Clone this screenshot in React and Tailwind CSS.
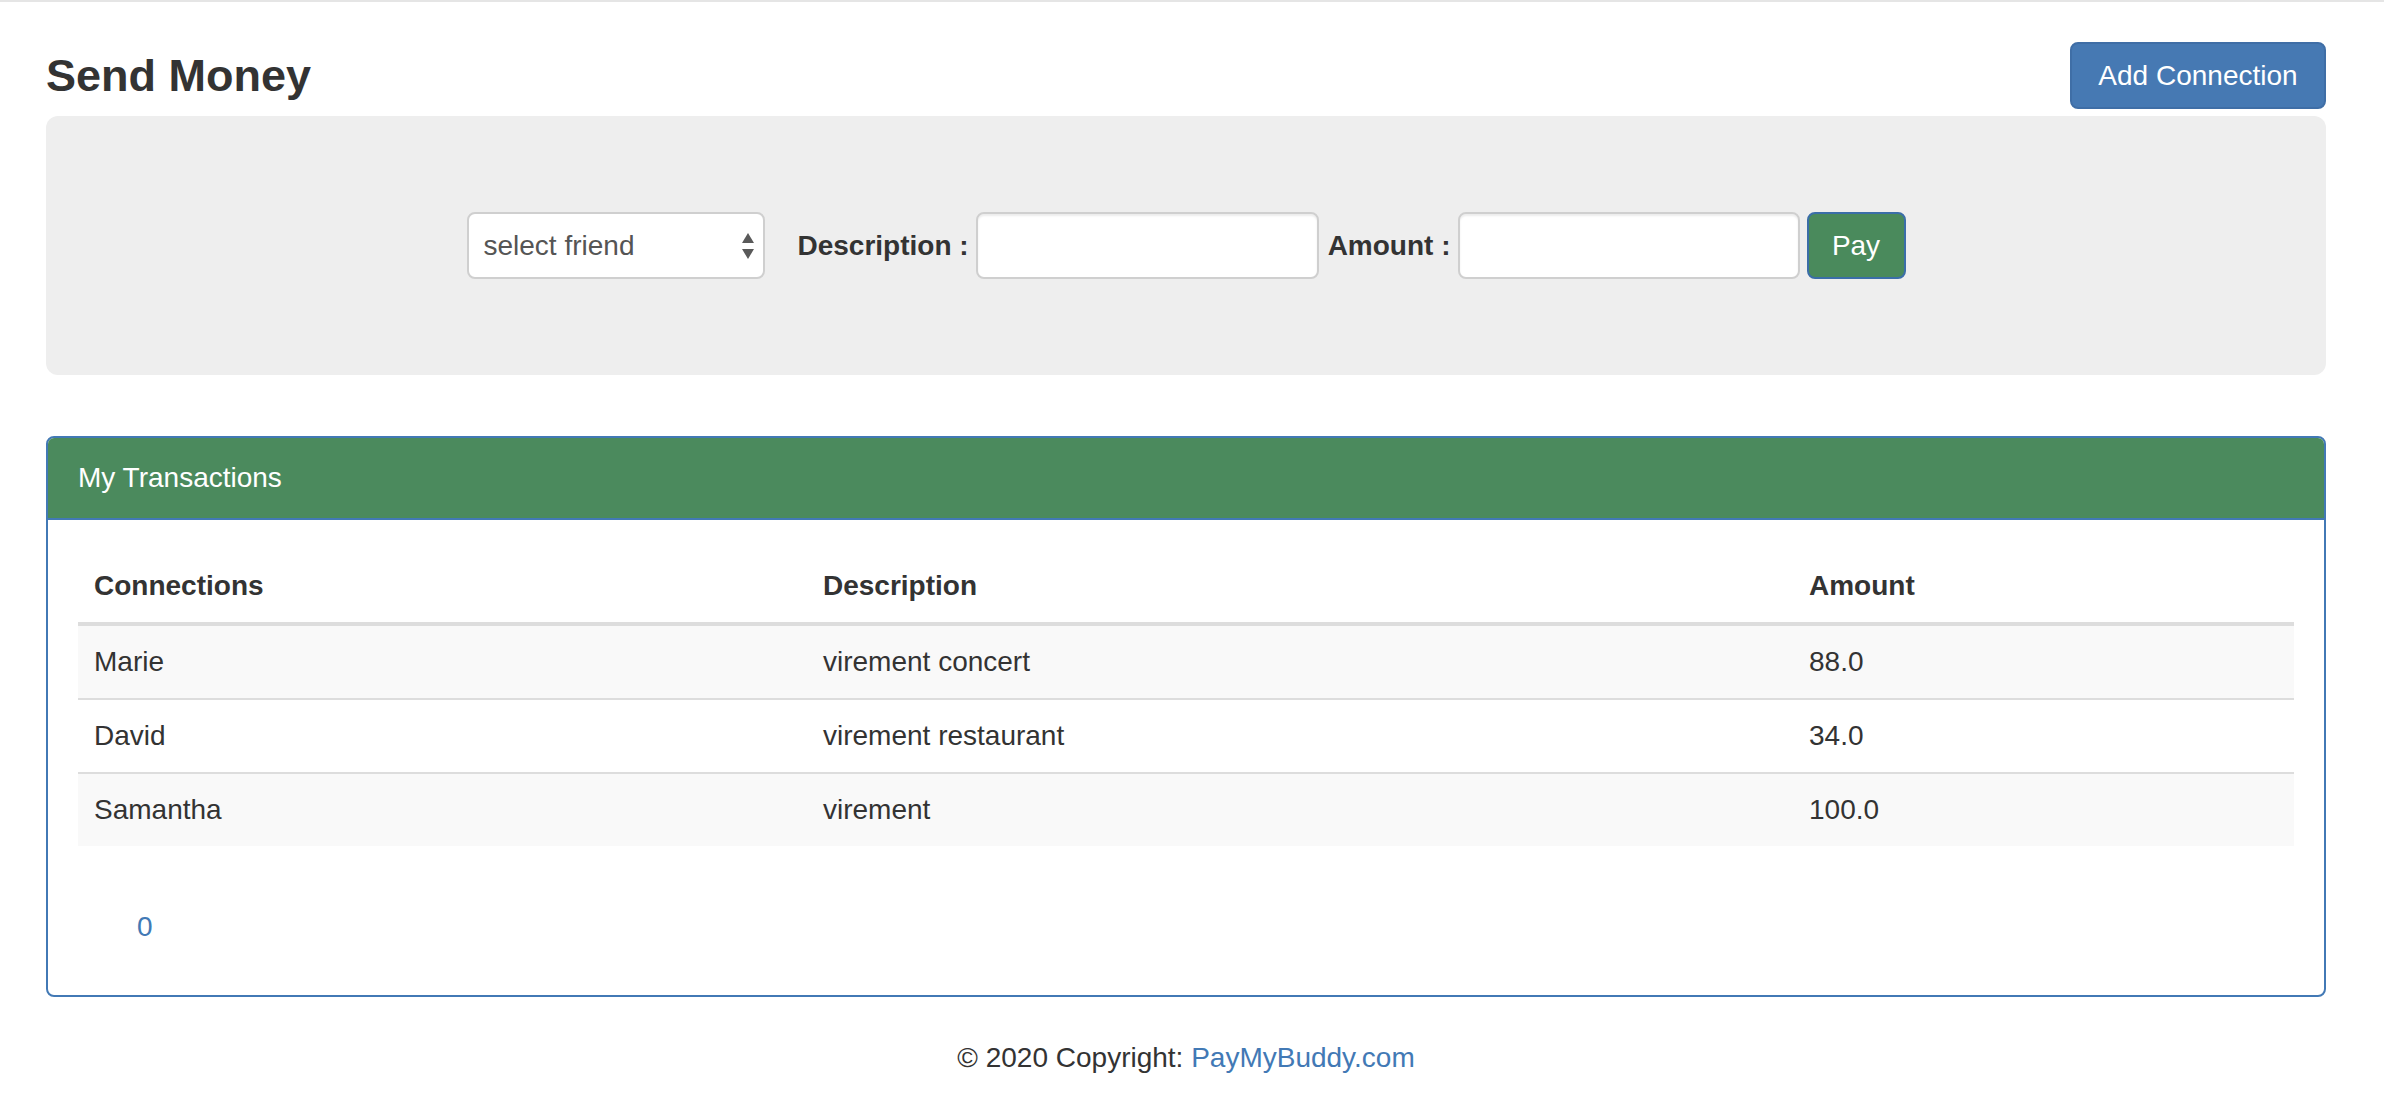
import React from "react";

const rows = [
  { name: "Marie", description: "virement concert", amount: "88.0" },
  { name: "David", description: "virement restaurant", amount: "34.0" },
  { name: "Samantha", description: "virement", amount: "100.0" },
];

function SelectArrows() {
  return (
    <svg width="12" height="26" viewBox="0 0 12 26" className="shrink-0">
      <path d="M6 0 L12 10 L0 10 Z" fill="#5a5a5a" />
      <path d="M0 16 L12 16 L6 26 Z" fill="#5a5a5a" />
    </svg>
  );
}

export default function App() {
  return (
    <div className="min-h-[1116px] bg-white font-['Liberation_Sans',Arial,sans-serif] text-[28px] leading-[40px] text-[#333]">
      <div className="h-[2px] w-full bg-[#e5e5e5]" />

      <div className="pl-[46px]">
        <div className="w-[2280px]">
          {/* Title + action */}
          <div className="mt-[40px] flex items-center justify-between">
            <h2 className="text-[45px] font-bold leading-none text-[#333]">Send Money</h2>
            <button className="h-[67px] w-[256px] rounded-[8px] border-2 border-[#3f6ea6] bg-[#4679b3] text-[28px] text-white">
              Add Connection
            </button>
          </div>

          {/* Send form */}
          <div className="mt-[7px] rounded-[12px] bg-[#eeeeee] py-[96px]">
            <form className="flex items-center justify-center">
              <div className="flex h-[67px] w-[298px] items-center justify-between rounded-[8px] border-2 border-[#cfcfcf] bg-white pl-[15px] pr-[9px]">
                <span className="text-[#555]">select friend</span>
                <SelectArrows />
              </div>
              <label className="ml-[33px] font-bold">Description :</label>
              <input
                type="text"
                className="ml-[7px] h-[67px] w-[343px] rounded-[8px] border-2 border-[#cfcfcf] bg-white px-[22px] shadow-[inset_0_2px_2px_rgba(0,0,0,0.075)] outline-none"
              />
              <label className="ml-[9px] font-bold">Amount :</label>
              <input
                type="text"
                className="ml-[7px] h-[67px] w-[342px] rounded-[8px] border-2 border-[#cfcfcf] bg-white px-[22px] shadow-[inset_0_2px_2px_rgba(0,0,0,0.075)] outline-none"
              />
              <button
                type="button"
                className="ml-[7px] h-[67px] w-[99px] rounded-[8px] border-2 border-[#3b6ea8] bg-[#4a8a5c] text-white"
              >
                Pay
              </button>
            </form>
          </div>

          {/* Transactions panel */}
          <div className="mt-[61px] overflow-hidden rounded-[8px] border-2 border-[#4279b5]">
            <div className="border-b-2 border-[#4279b5] bg-[#4b8a5d] px-[30px] py-[20px] text-white">
              My Transactions
            </div>
            <div className="px-[30px] pt-[30px] pb-[48px]">
              <table className="w-full table-fixed border-collapse text-left">
                <thead>
                  <tr className="border-b-4 border-[#dddddd]">
                    <th className="w-[729px] p-[16px] font-bold">Connections</th>
                    <th className="w-[986px] p-[16px] font-bold">Description</th>
                    <th className="p-[16px] font-bold">Amount</th>
                  </tr>
                </thead>
                <tbody>
                  {rows.map((row, i) => (
                    <tr
                      key={row.name}
                      className={`${i > 0 ? "border-t-2 border-[#dddddd]" : ""} ${
                        i % 2 === 0 ? "bg-[#f9f9f9]" : "bg-white"
                      }`}
                    >
                      <td className="p-[16px]">{row.name}</td>
                      <td className="p-[16px]">{row.description}</td>
                      <td className="p-[16px]">{row.amount}</td>
                    </tr>
                  ))}
                </tbody>
              </table>

              <div className="mt-[61px] pl-[59px]">
                <a className="text-[#4279b5]">0</a>
              </div>
            </div>
          </div>

          {/* Footer */}
          <div className="mt-[41px] text-center">
            © 2020 Copyright: <a className="text-[#4279b5]">PayMyBuddy.com</a>
          </div>
        </div>
      </div>
    </div>
  );
}
